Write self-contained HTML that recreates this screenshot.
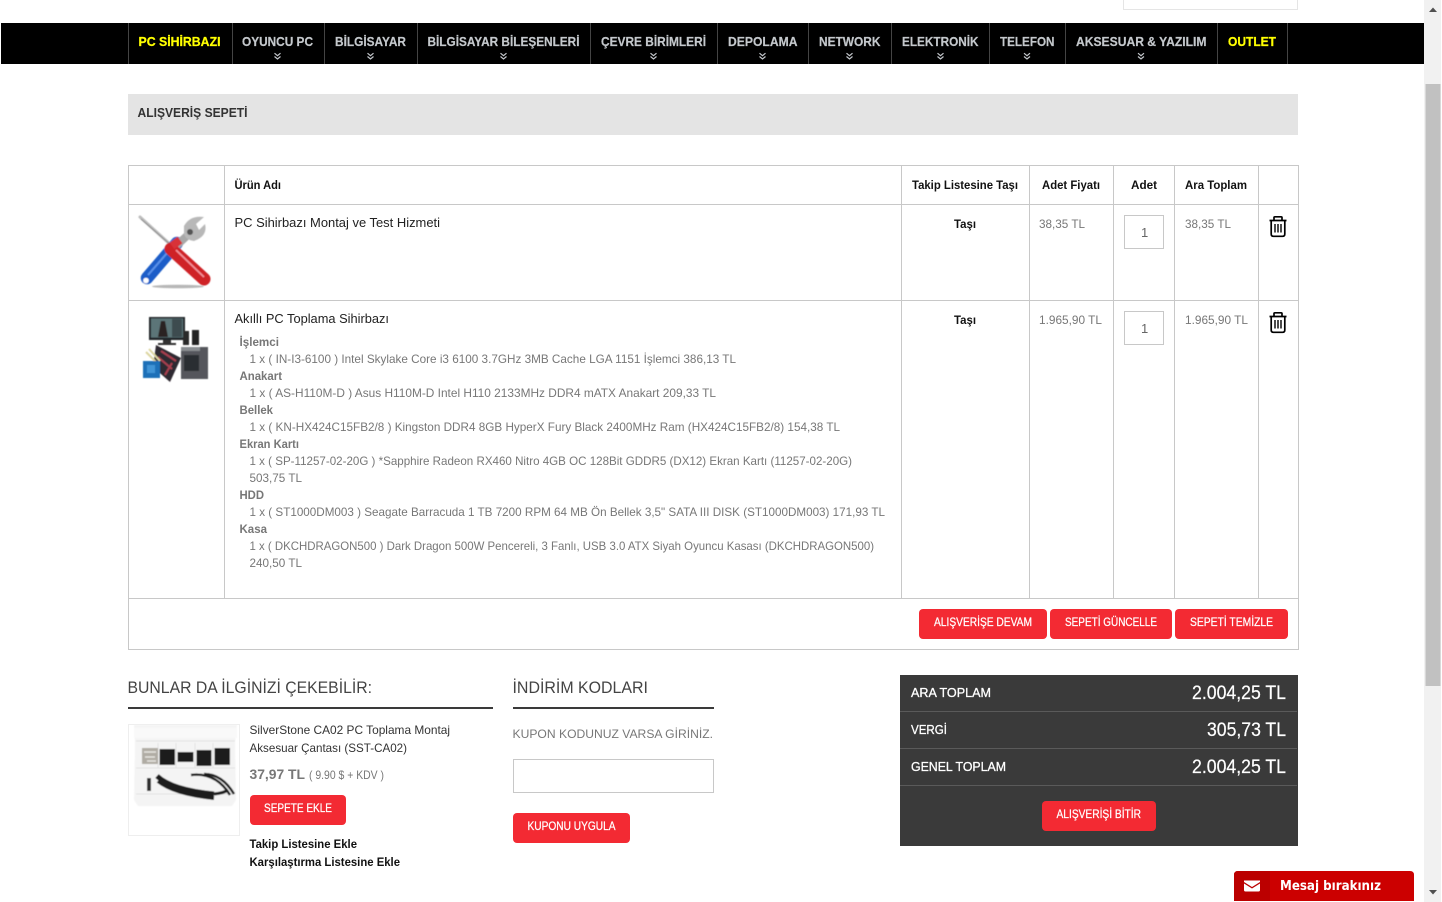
<!DOCTYPE html>
<html lang="tr"><head><meta charset="utf-8"><title>Alışveriş Sepeti</title>
<style>
html,body{margin:0;padding:0;background:#fff;overflow:hidden;width:1442px;height:902px}
svg{display:block}
text{font-family:"Liberation Sans",Arial,sans-serif;font-size:12px;fill:#777}
.n{font-size:13px;font-weight:bold;fill:#c4c8cc;stroke:#c4c8cc;stroke-width:.2}
.y{font-size:13px;font-weight:bold;fill:#ff0;stroke:#ff0;stroke-width:.25}
.h{font-weight:bold;fill:#111}
.g{fill:#777}
.gb{font-weight:bold;fill:#777}
.t{font-size:13px;fill:#222}
.w{fill:#fff;stroke:#fff;stroke-width:.25}
.wl{font-size:13px;fill:#fff;stroke:#fff;stroke-width:.3}
.v{font-size:19px;fill:#fff;stroke:#fff;stroke-width:.2}
.hd{font-size:17px;fill:#444}
</style></head><body>
<svg width="1442" height="902" viewBox="0 0 1442 902" xmlns="http://www.w3.org/2000/svg">
<defs>
<filter id="b" x="-10%" y="-10%" width="120%" height="120%"><feGaussianBlur stdDeviation=".55"/></filter>
<path id="chev" d="M-3 -2.8L0 -0.3L3 -2.8M-3 0.5L0 3L3 0.5" fill="none" stroke="#c4c8cc" stroke-width="1.2"/>
<g id="trash" fill="none" stroke="#000" stroke-width="1.7"><path d="M1269.5 220.5H1286.5"/><path d="M1274 220V217.5Q1274 216.8 1275 216.8H1281Q1282 216.8 1282 217.5V220"/><path d="M1271.2 220.5V234Q1271.2 236.3 1273.5 236.3H1282.5Q1284.8 236.3 1284.8 234V220.5"/><path d="M1275 224V232.5M1278 224V232.5M1281 224V232.5" stroke-width="1.4"/></g>
</defs>
<!-- search box -->
<path d="M1123.5 0V9.5H1297.5V0" fill="none" stroke="#e5e5e5"/>
<!-- nav -->
<rect x="1" y="23" width="1423" height="41" fill="#000"/>
<path d="M128.5 23V64M232.5 23V64M324.5 23V64M417.5 23V64M590.5 23V64M717.5 23V64M808.5 23V64M891.5 23V64M989.5 23V64M1065.5 23V64M1217.5 23V64M1287.5 23V64" stroke="#444"/>
<text class="y" x="138.5" y="46" textLength="82" lengthAdjust="spacingAndGlyphs">PC SİHİRBAZI</text>
<text class="n" x="242" y="46" textLength="71" lengthAdjust="spacingAndGlyphs">OYUNCU PC</text>
<text class="n" x="335" y="46" textLength="71" lengthAdjust="spacingAndGlyphs">BİLGİSAYAR</text>
<text class="n" x="427.5" y="46" textLength="152" lengthAdjust="spacingAndGlyphs">BİLGİSAYAR BİLEŞENLERİ</text>
<text class="n" x="601" y="46" textLength="105" lengthAdjust="spacingAndGlyphs">ÇEVRE BİRİMLERİ</text>
<text class="n" x="728" y="46" textLength="69.500" lengthAdjust="spacingAndGlyphs">DEPOLAMA</text>
<text class="n" x="819" y="46" textLength="61.500" lengthAdjust="spacingAndGlyphs">NETWORK</text>
<text class="n" x="902" y="46" textLength="76.500" lengthAdjust="spacingAndGlyphs">ELEKTRONİK</text>
<text class="n" x="1000" y="46" textLength="54.500" lengthAdjust="spacingAndGlyphs">TELEFON</text>
<text class="n" x="1076" y="46" textLength="130.500" lengthAdjust="spacingAndGlyphs">AKSESUAR &amp; YAZILIM</text>
<text class="y" x="1228" y="46" textLength="48" lengthAdjust="spacingAndGlyphs">OUTLET</text>
<use href="#chev" x="277.500" y="56"/><use href="#chev" x="370.500" y="56"/><use href="#chev" x="503.500" y="56"/><use href="#chev" x="653.500" y="56"/><use href="#chev" x="762.500" y="56"/><use href="#chev" x="849.500" y="56"/><use href="#chev" x="940.500" y="56"/><use href="#chev" x="1027" y="56"/><use href="#chev" x="1141" y="56"/>
<!-- title -->
<rect x="128" y="94" width="1170" height="41" fill="#e4e4e4"/>
<text x="137.500" y="117" textLength="110" lengthAdjust="spacingAndGlyphs" style="font-size:13px;font-weight:bold;fill:#333">ALIŞVERİŞ SEPETİ</text>
<!-- table -->
<g fill="none" stroke="#c8c8c8">
<rect x="128.500" y="165.500" width="1170" height="484"/>
<path d="M128.500 204.500H1298.500M128.500 300.500H1298.500M128.500 598.500H1298.500"/>
<path d="M224.500 165.500V598.500M901.500 165.500V598.500M1029.500 165.500V598.500M1113.500 165.500V598.500M1174.500 165.500V598.500M1258.500 165.500V598.500"/>
<rect x="1124.500" y="215.500" width="39" height="33"/>
<rect x="1124.500" y="311.500" width="39" height="33"/>
</g>
<text class="h" x="234.500" y="189" textLength="46.500" lengthAdjust="spacingAndGlyphs">Ürün Adı</text>
<text class="h" x="912" y="189" textLength="106" lengthAdjust="spacingAndGlyphs">Takip Listesine Taşı</text>
<text class="h" x="1042" y="189" textLength="58" lengthAdjust="spacingAndGlyphs">Adet Fiyatı</text>
<text class="h" x="1131" y="189" textLength="26" lengthAdjust="spacingAndGlyphs">Adet</text>
<text class="h" x="1185" y="189" textLength="62" lengthAdjust="spacingAndGlyphs">Ara Toplam</text>
<!-- row 1 -->
<text class="t" x="234.500" y="227" textLength="205.500" lengthAdjust="spacingAndGlyphs">PC Sihirbazı Montaj ve Test Hizmeti</text>
<text class="h" x="954" y="228" textLength="22" lengthAdjust="spacingAndGlyphs">Taşı</text>
<text class="g" x="1039" y="228" textLength="46" lengthAdjust="spacingAndGlyphs">38,35 TL</text>
<text x="1141" y="237" style="font-size:13px;fill:#666">1</text>
<text class="g" x="1185" y="228" textLength="46" lengthAdjust="spacingAndGlyphs">38,35 TL</text>
<use href="#trash"/>
<!-- tools image -->
<g filter="url(#b)">
<ellipse cx="178" cy="286.500" rx="26" ry="1.800" fill="#999" opacity=".7"/>
<path d="M140 217L172 246" stroke="#bdbdbd" stroke-width="3" stroke-linecap="round"/>
<path d="M141 219L172 246" stroke="#777" stroke-width=".7"/>
<path d="M177 243L147 278" stroke="#1f5dc8" stroke-width="12.500" stroke-linecap="round"/>
<path d="M174 245L148 275" stroke="#5a93ea" stroke-width="2"/>
<circle cx="146" cy="280.500" r="2.800" fill="#fff"/>
<path d="M176 246L190 233" stroke="#a8a8a8" stroke-width="8"/>
<path d="M184 226Q190 215 204 217L196 224L199 230L205 224Q208 236 194 241Q186 240 184 234Z" fill="#b8b8b8"/>
<circle cx="190" cy="232" r="3" fill="#555"/>
<path d="M171 249L204 279" stroke="#cf2028" stroke-width="13" stroke-linecap="round"/>
<path d="M172 246L180 240" stroke="#d83038" stroke-width="8"/>
<path d="M176 250L204 277" stroke="#f29098" stroke-width="1.800"/>
</g>
<!-- row 2 -->
<text class="t" x="234.500" y="323" textLength="154.500" lengthAdjust="spacingAndGlyphs">Akıllı PC Toplama Sihirbazı</text>
<text class="h" x="954" y="324" textLength="22" lengthAdjust="spacingAndGlyphs">Taşı</text>
<text class="g" x="1039" y="324" textLength="63" lengthAdjust="spacingAndGlyphs">1.965,90 TL</text>
<text x="1141" y="333" style="font-size:13px;fill:#666">1</text>
<text class="g" x="1185" y="324" textLength="63" lengthAdjust="spacingAndGlyphs">1.965,90 TL</text>
<use href="#trash" y="96"/>
<!-- pc image -->
<g filter="url(#b)">
<rect x="149" y="317" width="36" height="23" fill="#22262a"/>
<rect x="151" y="318.500" width="32" height="19" fill="#5c7478"/>
<path d="M158 337L161 321L165 321L168 337Z" fill="#2b2420"/>
<rect x="172" y="319" width="10" height="18" fill="#3c4c50"/>
<path d="M163 340H171V343H176V345H158V343H163Z" fill="#333"/>
<rect x="183" y="331" width="6" height="14" fill="#2a2a2a"/><rect x="192" y="330" width="7" height="15" fill="#222"/>
<path d="M156 345L181 358L170 382L153 367Z" fill="#2e2a30"/>
<path d="M161 351L176 361M158 357L172 369M165 375L172 363" stroke="#a84050" stroke-width="2"/>
<path d="M146 352L158 364M149 349L160 361" stroke="#ddd6a0" stroke-width="2"/>
<rect x="143" y="361" width="17" height="17" fill="#1c70b8"/>
<rect x="147" y="365" width="8" height="8" fill="#3f94d6"/>
<rect x="181" y="347" width="27" height="32" fill="#54575c"/>
<rect x="181" y="347" width="19" height="4" fill="#888c90"/>
<rect x="184" y="355" width="15" height="16" fill="#2a2d31"/>
</g>
<!-- details -->
<text class="gb" x="239.500" y="346" textLength="39.500" lengthAdjust="spacingAndGlyphs">İşlemci</text>
<text class="g" x="249.500" y="363" textLength="486.500" lengthAdjust="spacingAndGlyphs">1 x ( IN-I3-6100 ) Intel Skylake Core i3 6100 3.7GHz 3MB Cache LGA 1151 İşlemci 386,13 TL</text>
<text class="gb" x="239.500" y="380" textLength="42.500" lengthAdjust="spacingAndGlyphs">Anakart</text>
<text class="g" x="249.500" y="397" textLength="466.500" lengthAdjust="spacingAndGlyphs">1 x ( AS-H110M-D ) Asus H110M-D Intel H110 2133MHz DDR4 mATX Anakart 209,33 TL</text>
<text class="gb" x="239.500" y="414" textLength="33.500" lengthAdjust="spacingAndGlyphs">Bellek</text>
<text class="g" x="249.500" y="431" textLength="590.500" lengthAdjust="spacingAndGlyphs">1 x ( KN-HX424C15FB2/8 ) Kingston DDR4 8GB HyperX Fury Black 2400MHz Ram (HX424C15FB2/8) 154,38 TL</text>
<text class="gb" x="239.500" y="448" textLength="59.500" lengthAdjust="spacingAndGlyphs">Ekran Kartı</text>
<text class="g" x="249.500" y="465" textLength="602.500" lengthAdjust="spacingAndGlyphs">1 x ( SP-11257-02-20G ) *Sapphire Radeon RX460 Nitro 4GB OC 128Bit GDDR5 (DX12) Ekran Kartı (11257-02-20G)</text>
<text class="g" x="249.500" y="482" textLength="52.500" lengthAdjust="spacingAndGlyphs">503,75 TL</text>
<text class="gb" x="239.500" y="499" textLength="24.500" lengthAdjust="spacingAndGlyphs">HDD</text>
<text class="g" x="249.500" y="516" textLength="635.500" lengthAdjust="spacingAndGlyphs">1 x ( ST1000DM003 ) Seagate Barracuda 1 TB 7200 RPM 64 MB Ön Bellek 3,5" SATA III DISK (ST1000DM003) 171,93 TL</text>
<text class="gb" x="239.500" y="533" textLength="27.500" lengthAdjust="spacingAndGlyphs">Kasa</text>
<text class="g" x="249.500" y="550" textLength="624.500" lengthAdjust="spacingAndGlyphs">1 x ( DKCHDRAGON500 ) Dark Dragon 500W Pencereli, 3 Fanlı, USB 3.0 ATX Siyah Oyuncu Kasası (DKCHDRAGON500)</text>
<text class="g" x="249.500" y="567" textLength="52.500" lengthAdjust="spacingAndGlyphs">240,50 TL</text>
<!-- buttons -->
<g fill="#f32a33">
<rect x="919" y="609" width="128" height="30" rx="4"/>
<rect x="1050" y="609" width="122" height="30" rx="4"/>
<rect x="1175" y="609" width="113" height="30" rx="4"/>
<rect x="250" y="795" width="96" height="30" rx="4"/>
<rect x="513" y="813" width="117" height="30" rx="4"/>
</g>
<text class="w" x="934" y="626" textLength="98" lengthAdjust="spacingAndGlyphs">ALIŞVERİŞE DEVAM</text>
<text class="w" x="1065" y="626" textLength="92" lengthAdjust="spacingAndGlyphs">SEPETİ GÜNCELLE</text>
<text class="w" x="1190" y="626" textLength="83" lengthAdjust="spacingAndGlyphs">SEPETİ TEMİZLE</text>
<!-- related -->
<text class="hd" x="127.500" y="693" textLength="244.500" lengthAdjust="spacingAndGlyphs">BUNLAR DA İLGİNİZİ ÇEKEBİLİR:</text>
<rect x="128" y="707" width="365" height="2" fill="#3a3a3a"/>
<rect x="128.500" y="724.500" width="111" height="111" fill="#fff" stroke="#eee"/>
<g filter="url(#b)">
<path d="M134 725H237L235 742L236 800L232 806H138L134 800L135 742Z" fill="#f4f4f4"/>
<rect x="134" y="728" width="103" height="10" fill="#f9f9f9"/>
<path d="M136 741H235M136 768H235M158 743V768M176 743V768M195 743V768M213 743V768M136 794H235" stroke="#e2e2e2" fill="none"/>
<rect x="142" y="748" width="16" height="16" fill="#b0aca4"/>
<path d="M144 752L156 752M145 757L155 757M147 761L156 761" stroke="#e8e6e2" stroke-width="1.500"/>
<rect x="159.500" y="749" width="15.500" height="16" fill="#1d1d1d"/>
<rect x="177.500" y="752" width="16" height="10" fill="#1d1d1d"/>
<rect x="196.500" y="750" width="15" height="16" fill="#1d1d1d"/>
<rect x="214.500" y="748" width="15.500" height="17" fill="#1d1d1d"/>
<rect x="147" y="778" width="4" height="13" fill="#333"/>
<path d="M157 776Q172 790 214 794" stroke="#1c1c1c" stroke-width="5" fill="none"/>
<path d="M158 781Q174 794 214 798" stroke="#1c1c1c" stroke-width="4" fill="none"/>
<path d="M191 775Q216 772 230 795" stroke="#1c1c1c" stroke-width="2.500" fill="none"/>
<path d="M204 774Q222 774 234 794" stroke="#1c1c1c" stroke-width="2.500" fill="none"/>
<path d="M214 794Q224 793 228 790" stroke="#1c1c1c" stroke-width="3" fill="none"/>
</g>
<text x="249.500" y="734" textLength="200.500" lengthAdjust="spacingAndGlyphs" style="fill:#333">SilverStone CA02 PC Toplama Montaj</text>
<text x="249.500" y="752" textLength="157.500" lengthAdjust="spacingAndGlyphs" style="fill:#333">Aksesuar Çantası (SST-CA02)</text>
<text x="249.500" y="779" textLength="55.500" lengthAdjust="spacingAndGlyphs" style="font-size:14px;font-weight:bold;fill:#777">37,97 TL</text>
<text class="g" x="309" y="779" textLength="75" lengthAdjust="spacingAndGlyphs">( 9.90 $ + KDV )</text>
<text class="w" x="264" y="812" textLength="68" lengthAdjust="spacingAndGlyphs">SEPETE EKLE</text>
<text class="h" x="249.500" y="848" textLength="107.500" lengthAdjust="spacingAndGlyphs">Takip Listesine Ekle</text>
<text class="h" x="249.500" y="866" textLength="150.500" lengthAdjust="spacingAndGlyphs">Karşılaştırma Listesine Ekle</text>
<!-- coupon -->
<text class="hd" x="512.500" y="693" textLength="135.500" lengthAdjust="spacingAndGlyphs">İNDİRİM KODLARI</text>
<rect x="513" y="707" width="201" height="2" fill="#3a3a3a"/>
<text class="g" x="512.500" y="738" textLength="200.500" lengthAdjust="spacingAndGlyphs">KUPON KODUNUZ VARSA GİRİNİZ.</text>
<rect x="513.500" y="759.500" width="200" height="33" fill="#fff" stroke="#c8c8c8"/>
<text class="w" x="527.500" y="830" textLength="88" lengthAdjust="spacingAndGlyphs">KUPONU UYGULA</text>
<!-- totals -->
<rect x="900" y="675" width="398" height="171" fill="#3a3a3a"/>
<path d="M900 711.500H1297M900 748.500H1297M900 785.500H1297" stroke="#5a5a5a"/>
<text class="wl" x="911" y="697" textLength="80" lengthAdjust="spacingAndGlyphs">ARA TOPLAM</text>
<text class="wl" x="911" y="734" textLength="36" lengthAdjust="spacingAndGlyphs">VERGİ</text>
<text class="wl" x="911" y="771" textLength="95" lengthAdjust="spacingAndGlyphs">GENEL TOPLAM</text>
<text class="v" x="1192" y="699" textLength="94" lengthAdjust="spacingAndGlyphs">2.004,25 TL</text>
<text class="v" x="1207" y="736" textLength="79" lengthAdjust="spacingAndGlyphs">305,73 TL</text>
<text class="v" x="1192" y="773" textLength="94" lengthAdjust="spacingAndGlyphs">2.004,25 TL</text>
<rect x="1042" y="801" width="114" height="30" rx="4" fill="#f32a33"/>
<text class="w" x="1056.500" y="818" textLength="84.500" lengthAdjust="spacingAndGlyphs">ALIŞVERİŞİ BİTİR</text>
<!-- chat -->
<path d="M1234 901V875Q1234 871 1238 871H1410Q1414 871 1414 875V901Z" fill="#cc0000"/>
<path d="M1234 901V875Q1234 871 1238 871H1270V901Z" fill="#bb0000"/>
<path d="M1244 880.500H1260V882L1252 887L1244 882Z" fill="#fff"/>
<path d="M1244 883.500L1252 888.500L1260 883.500V890Q1260 891.500 1258.500 891.500H1245.500Q1244 891.500 1244 890Z" fill="#fff"/>
<text x="1280" y="890" textLength="101" lengthAdjust="spacingAndGlyphs" style="font-family:'DejaVu Sans',sans-serif;font-size:13px;font-weight:bold;fill:#fff">Mesaj bırakınız</text>
<!-- scrollbar -->
<rect x="1424" y="0" width="18" height="902" fill="#f1f1f1"/>
<rect x="1425.500" y="84" width="15" height="602" fill="#c1c1c1"/>
<rect x="1441" y="0" width="1" height="902" fill="#fff"/>
<path d="M1429 12L1433 7.500L1437 12Z" fill="#505050"/>
<path d="M1429 890L1433 894.500L1437 890Z" fill="#505050"/>
</svg>
</body></html>
